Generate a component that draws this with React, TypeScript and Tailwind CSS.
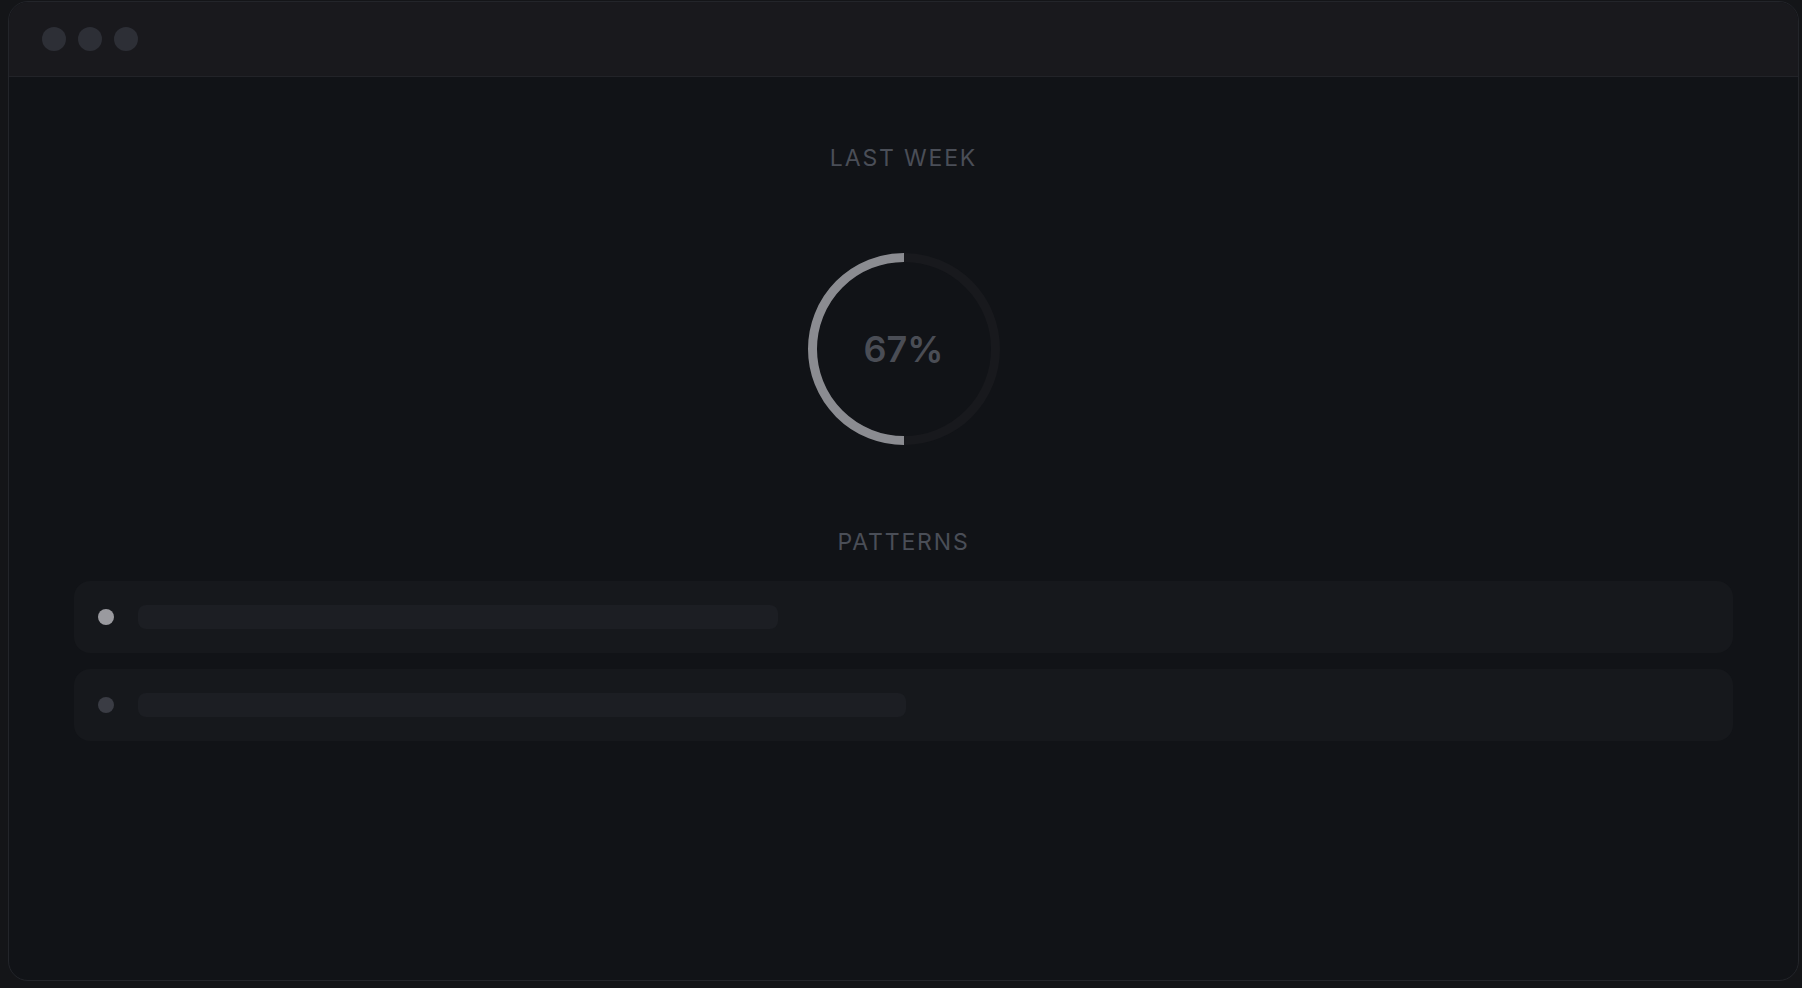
import React from 'react';

const patterns = [
    { width: 640, dot: 'bg-[#9a9a9f]' },
    { width: 768, dot: 'bg-[#3a3c44]' },
];

const ProgressRing: React.FC<{ label: string }> = ({ label }) => (
    <div className="relative w-[192px] h-[192px]">
        <svg width="192" height="192" viewBox="0 0 192 192" className="block">
            <circle cx="96" cy="96" r="91.5" fill="none" stroke="#18191d" strokeWidth="9" />
            <path d="M 96 4.5 A 91.5 91.5 0 0 0 96 187.5" fill="none" stroke="#8b8c91" strokeWidth="9" />
        </svg>
        <div className="absolute inset-0 flex items-center justify-center">
            <span className="text-[36px] leading-none font-semibold text-[#4a4d55]">{label}</span>
        </div>
    </div>
);

export default function App() {
    return (
        <div className="w-[1802px] h-[988px] bg-[#141518] overflow-hidden" style={{ fontFamily: 'Inter, "Noto Sans", sans-serif' }}>
            <div className="ml-[8px] mt-[1px] w-[1791px] h-[980px] rounded-[20px] border border-[#23252a] bg-[#111317] overflow-hidden flex flex-col">
                <div className="h-[75px] shrink-0 bg-[#19191d] border-b border-[#222328] flex items-center gap-[12px] pl-[33px]">
                    <div className="w-[24px] h-[24px] rounded-full bg-[#2d2f36]" />
                    <div className="w-[24px] h-[24px] rounded-full bg-[#2d2f36]" />
                    <div className="w-[24px] h-[24px] rounded-full bg-[#2d2f36]" />
                </div>

                <div className="flex flex-col items-center pt-[65px] px-[65px]">
                    <h2 className="text-[23px] leading-[32px] tracking-[0.08em] text-[#4a4e57] uppercase">Last Week</h2>
                    <div className="mt-[79px]">
                        <ProgressRing label="67%" />
                    </div>
                    <h3 className="mt-[81px] text-[23px] leading-[32px] tracking-[0.08em] text-[#4a4e57] uppercase">Patterns</h3>

                    <div className="mt-[23px] w-full flex flex-col gap-[16px]">
                        {patterns.map((p, i) => (
                            <div key={i} className="h-[72px] rounded-[16px] bg-[#16181c] flex items-center pl-[24px] gap-[24px]">
                                <div className={`w-[16px] h-[16px] rounded-full ${p.dot}`} />
                                <div className="h-[24px] rounded-[8px] bg-[#1c1e23]" style={{ width: p.width }} />
                            </div>
                        ))}
                    </div>
                </div>
            </div>
        </div>
    );
}
